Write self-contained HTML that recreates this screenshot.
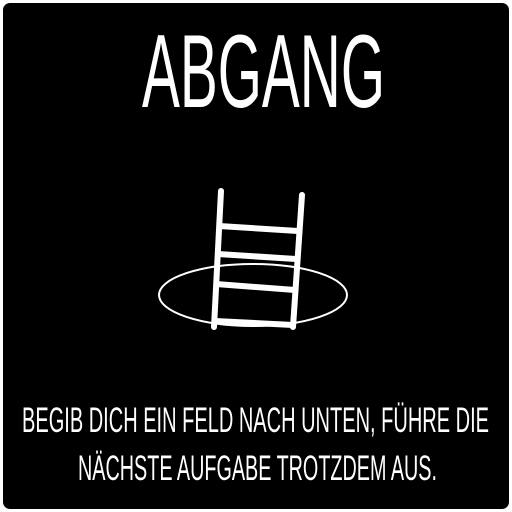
<!DOCTYPE html>
<html><head><style>
html,body{margin:0;padding:0;background:#fff;width:512px;height:512px;overflow:hidden}
svg{display:block}
</style></head><body>
<svg width="512" height="512" viewBox="0 0 512 512" xmlns="http://www.w3.org/2000/svg">
<rect x="3" y="3" width="506" height="506" rx="7" fill="#000"/>
<g font-family="Liberation Sans, sans-serif" fill="#fff">
<text x="142" y="107" font-size="104" textLength="243" lengthAdjust="spacingAndGlyphs">ABGANG</text>
<text x="22" y="432" font-size="35" textLength="467" lengthAdjust="spacingAndGlyphs">BEGIB DICH EIN FELD NACH UNTEN, FÜHRE DIE</text>
<text x="78" y="480" font-size="35" textLength="359" lengthAdjust="spacingAndGlyphs">NÄCHSTE AUFGABE TROTZDEM AUS.</text>
</g>
<ellipse cx="253" cy="295" rx="94" ry="31" fill="none" stroke="#fff" stroke-width="2"/>
<g stroke="#fff" stroke-width="6" stroke-linecap="round">
<line x1="221" y1="191" x2="214" y2="327"/>
<line x1="302" y1="195" x2="293" y2="327"/>
</g>
<g stroke="#fff" stroke-width="6">
<line x1="219" y1="226" x2="298" y2="231"/>
<line x1="218" y1="254" x2="296" y2="259"/>
<line x1="216" y1="284" x2="295" y2="290"/>
<line x1="215" y1="321" x2="293" y2="325"/>
</g>
</svg>
</body></html>
